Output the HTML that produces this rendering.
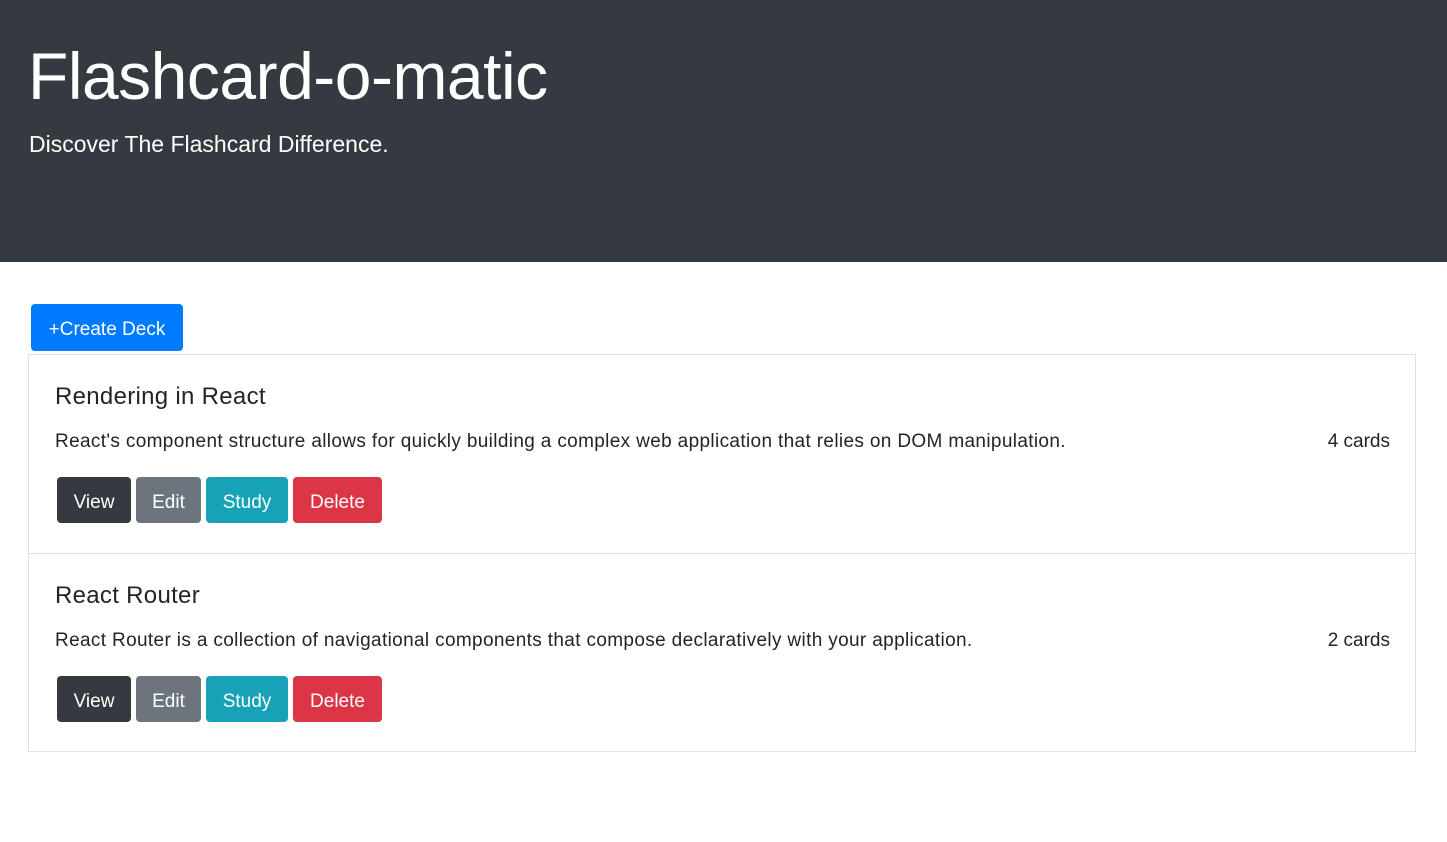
<!DOCTYPE html>
<html><head><meta charset="utf-8"><style>
*{box-sizing:border-box;margin:0;padding:0}
body{width:1447px;height:842px;background:#fff;font-family:"Liberation Sans",sans-serif;color:#212529;position:relative;overflow:hidden}
.hdr{position:absolute;left:0;top:0;width:1447px;height:262px;background:#343a40;color:#fff}
.t1{position:absolute;left:28px;top:36px;font-size:66px;font-weight:300;letter-spacing:-0.5px;line-height:80px}
.t2{position:absolute;left:29px;top:129px;font-size:23px;font-weight:300;line-height:30px}
.b{position:absolute;height:46px;border-radius:4px;color:#fff;font-size:19px;display:flex;align-items:center;justify-content:center;padding-top:5px}
.card{position:absolute;left:28px;width:1388px;border:1px solid #dee2e6}
.h{position:absolute;left:26px;font-size:24px;font-weight:500;letter-spacing:0.3px}
.d{position:absolute;left:26px;font-size:19px;letter-spacing:0.35px}
.c{position:absolute;right:25px;font-size:19px}
</style></head><body>
<div class="hdr"><div class="t1">Flashcard-o-matic</div><div class="t2">Discover The Flashcard Difference.</div></div>
<div class="b" style="left:31px;top:304px;width:152px;height:47px;background:#007bff">+Create Deck</div>
<div class="card" style="top:354px;height:200px">
<div class="h" style="top:28px">Rendering in React</div>
<div class="d" style="top:76px">React's component structure allows for quickly building a complex web application that relies on DOM manipulation.</div>
<div class="c" style="top:76px">4 cards</div>
<div class="b" style="left:28px;top:122px;width:74px;background:#343a40">View</div>
<div class="b" style="left:107px;top:122px;width:65px;background:#6c757d">Edit</div>
<div class="b" style="left:177px;top:122px;width:82px;background:#17a2b8">Study</div>
<div class="b" style="left:264px;top:122px;width:89px;background:#dc3545">Delete</div>
</div>
<div class="card" style="top:553px;height:199px">
<div class="h" style="top:28px">React Router</div>
<div class="d" style="top:76px">React Router is a collection of navigational components that compose declaratively with your application.</div>
<div class="c" style="top:76px">2 cards</div>
<div class="b" style="left:28px;top:122px;width:74px;background:#343a40">View</div>
<div class="b" style="left:107px;top:122px;width:65px;background:#6c757d">Edit</div>
<div class="b" style="left:177px;top:122px;width:82px;background:#17a2b8">Study</div>
<div class="b" style="left:264px;top:122px;width:89px;background:#dc3545">Delete</div>
</div>
</body></html>
